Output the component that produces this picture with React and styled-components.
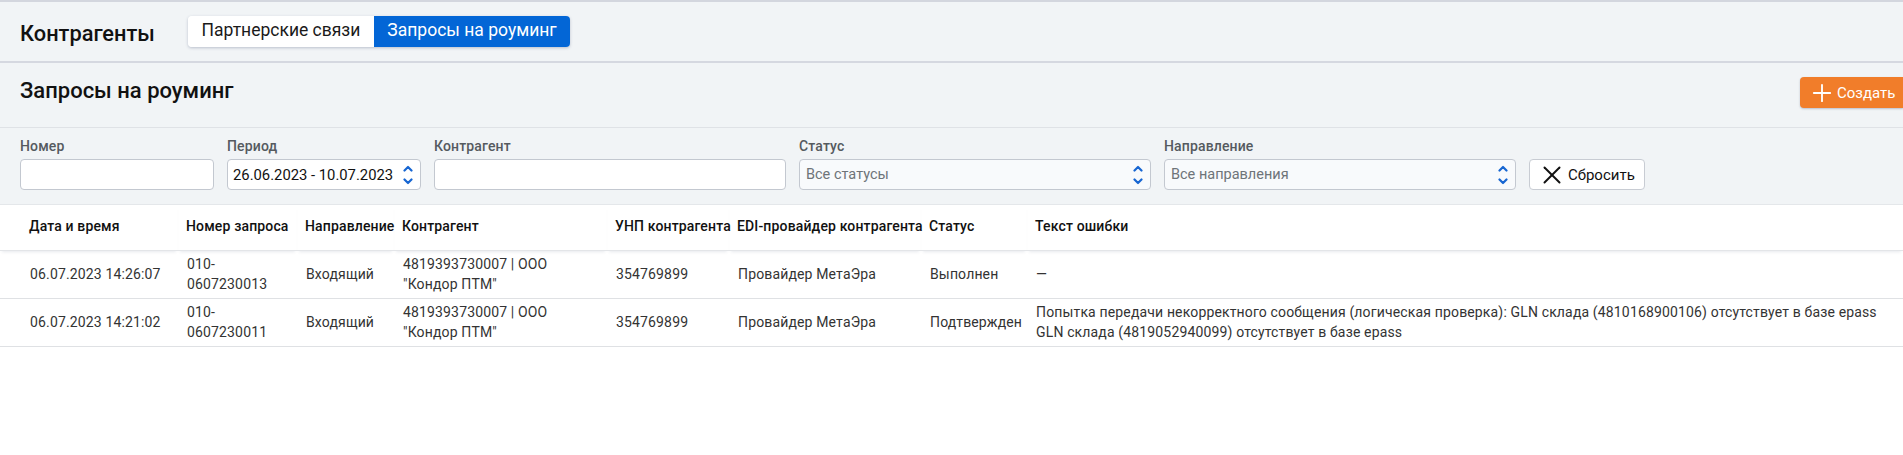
import React from "react"
import styled, { createGlobalStyle } from "styled-components"
import { Plus, X } from "lucide-react"

const GlobalStyle = createGlobalStyle`
  html, body {
    margin: 0;
    padding: 0;
    background: #fff;
    font-family: Roboto, "Liberation Sans", sans-serif;
    color: #111;
    overflow: hidden;
  }
`

const TopBar = styled.header`
  box-sizing: border-box;
  background: #f1f4f6;
  border-top: 2px solid #d3d6de;
  border-bottom: 2px solid #d5d8e0;
  padding: 14px 0 0 20px;
  display: flex;
  align-items: flex-start;
  height: 63px;
`

const AppTitle = styled.h2`
  margin: 0;
  font-size: 21.8px;
  line-height: 36px;
  font-weight: 500;
  width: 168px;
`

const Tabs = styled.div`
  display: flex;
  border-radius: 4px;
  overflow: hidden;
  box-shadow: 0 1px 3px rgba(60, 70, 110, 0.3);
`

const Tab = styled.div`
  height: 31px;
  line-height: 29px;
  font-size: 17.5px;
  padding: 0 13.5px;
  background: ${(p) => (p.$active ? "#0366d6" : "#fff")};
  color: ${(p) => (p.$active ? "#fff" : "#1a1a1a")};
`

const TitleBar = styled.section`
  height: 65px;
  box-sizing: border-box;
  background: #f1f4f6;
  border-bottom: 1px solid #dfe2e6;
  display: flex;
  justify-content: space-between;
  padding: 14px 0 0 20px;
`

const PageTitle = styled.h1`
  margin: 0;
  font-size: 22px;
  line-height: 28px;
  font-weight: 500;
`

const CreateButton = styled.button`
  width: 103px;
  height: 31px;
  box-sizing: border-box;
  border: 0;
  border-radius: 4px 0 0 4px;
  background: #f17d2a;
  color: #fff;
  font: 400 15px Roboto, sans-serif;
  display: flex;
  align-items: center;
  gap: 1px;
  padding: 0 0 0 8px;
  box-shadow: 0 1px 2px rgba(60, 70, 110, 0.3);
`

const Filters = styled.section`
  height: 77px;
  box-sizing: border-box;
  background: #f1f4f6;
  border-bottom: 1px solid #e4e7ea;
  display: flex;
  align-items: flex-end;
  gap: 13.5px;
  padding: 0 0 14px 20px;
`

const Field = styled.div`
  width: ${(p) => p.$w}px;
`

const Label = styled.div`
  font-size: 14px;
  line-height: 16px;
  font-weight: 500;
  letter-spacing: 0.15px;
  color: #555a5f;
  margin-bottom: 5px;
  margin-top: -1px;
`

const Input = styled.div`
  height: 31px;
  box-sizing: border-box;
  border: 1px solid #c3c8d0;
  border-radius: 4px;
  background: ${(p) => (p.$select ? "#f8fafc" : "#fff")};
  color: ${(p) => (p.$select ? "#6e7479" : "#111")};
  font-size: ${(p) => (p.$select ? "14.5px" : "14.8px")};
  display: flex;
  align-items: center;
  justify-content: space-between;
  padding: 0 7px 0 ${(p) => (p.$select ? "6px" : "5px")};
  white-space: nowrap;
`

const ResetButton = styled.button`
  width: 116px;
  height: 31px;
  box-sizing: border-box;
  border: 1px solid #c8ccd3;
  border-radius: 4px;
  background: #fff;
  color: #111;
  font: 400 15px Roboto, sans-serif;
  display: flex;
  align-items: center;
  gap: 1px;
  padding: 0 0 0 7px;
`

const Table = styled.table`
  width: 100%;
  border-collapse: collapse;
  table-layout: fixed;
  font-size: 14px;
  line-height: 20px;
  letter-spacing: 0.15px;

  th {
    height: 42px;
    padding: 0 0 3px 8px;
    text-align: left;
    font-weight: 500;
    color: #111;
    white-space: nowrap;
    border-bottom: 1px solid #e3e5e8;
    box-shadow: 0 3px 3px -2px rgba(60, 70, 110, 0.12);
  }

  td {
    height: 45px;
    padding: 0 4px 2px 9px;
    color: #333;
    border-bottom: 1px solid #dfe1e4;
  }

  th:first-child {
    padding-left: 29px;
  }

  td:first-child {
    padding-left: 30px;
  }
`

const Chevrons = () => (
  <svg width="10" height="22" viewBox="0 0 10 22" fill="none" stroke="#1766d2" strokeWidth="2.2" strokeLinecap="round" strokeLinejoin="round">
    <path d="M1.5 6.5 5 3l3.5 3.5" />
    <path d="M1.5 15.5 5 19l3.5-3.5" />
  </svg>
)

const columns = [178, 119, 97, 213, 122, 192, 106]
const headers = ["Дата и время", "Номер запроса", "Направление", "Контрагент", "УНП контрагента", "EDI-провайдер контрагента", "Статус", "Текст ошибки"]

const rows = [
  {
    date: "06.07.2023 14:26:07",
    number: "010-0607230013",
    status: "Выполнен",
    error: "—",
  },
  {
    date: "06.07.2023 14:21:02",
    number: "010-0607230011",
    status: "Подтвержден",
    error: (
      <>
        Попытка передачи некорректного сообщения (логическая проверка): GLN склада (4810168900106) отсутствует в базе epass
        <br />
        GLN склада (4819052940099) отсутствует в базе epass
      </>
    ),
  },
]

export default function App() {
  return (
    <>
      <GlobalStyle />
      <TopBar>
        <AppTitle>Контрагенты</AppTitle>
        <Tabs>
          <Tab>Партнерские связи</Tab>
          <Tab $active>Запросы на роуминг</Tab>
        </Tabs>
      </TopBar>
      <TitleBar>
        <PageTitle>Запросы на роуминг</PageTitle>
        <CreateButton>
          <Plus size={28} strokeWidth={1.6} />
          Создать
        </CreateButton>
      </TitleBar>
      <Filters>
        <Field $w={193.5}>
          <Label>Номер</Label>
          <Input />
        </Field>
        <Field $w={193.5}>
          <Label>Период</Label>
          <Input>
            26.06.2023 - 10.07.2023
            <Chevrons />
          </Input>
        </Field>
        <Field $w={351.5}>
          <Label>Контрагент</Label>
          <Input />
        </Field>
        <Field $w={351.5}>
          <Label>Статус</Label>
          <Input $select>
            Все статусы
            <Chevrons />
          </Input>
        </Field>
        <Field $w={351.5}>
          <Label>Направление</Label>
          <Input $select>
            Все направления
            <Chevrons />
          </Input>
        </Field>
        <ResetButton>
          <X size={30} strokeWidth={1.6} />
          Сбросить
        </ResetButton>
      </Filters>
      <Table>
        <colgroup>
          {columns.map((w) => (
            <col key={w} style={{ width: w }} />
          ))}
          <col />
        </colgroup>
        <thead>
          <tr>
            {headers.map((h) => (
              <th key={h}>{h}</th>
            ))}
          </tr>
        </thead>
        <tbody>
          {rows.map((r) => (
            <tr key={r.number}>
              <td>{r.date}</td>
              <td>{r.number}</td>
              <td>Входящий</td>
              <td>
                4819393730007 | ООО
                <br />
                "Кондор ПТМ"
              </td>
              <td>354769899</td>
              <td>Провайдер МетаЭра</td>
              <td>{r.status}</td>
              <td>{r.error}</td>
            </tr>
          ))}
        </tbody>
      </Table>
    </>
  )
}
